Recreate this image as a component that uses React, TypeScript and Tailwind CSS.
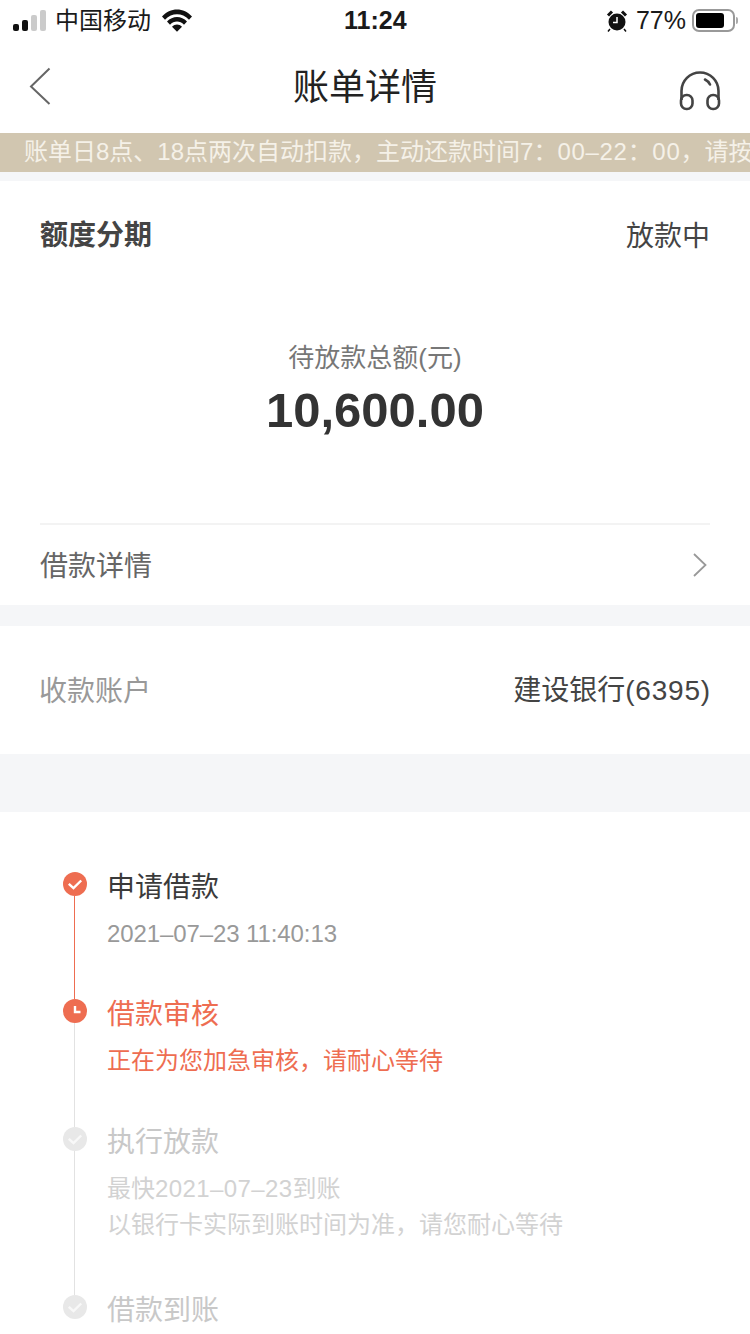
import React from 'react'

const font = { fontFamily: '"Liberation Sans", "Noto Sans CJK SC", sans-serif' }

function StatusBar() {
  return (
    <div className="h-[44px] flex items-center justify-between relative text-[#1a1a1a]">
      <div className="flex items-center pl-[13px]">
        <div className="flex items-end gap-[3px] h-[21px] mt-[-3px]">
          <span className="w-[6px] h-[7px] rounded-[2px] bg-[#111]" />
          <span className="w-[6px] h-[11px] rounded-[2px] bg-[#111]" />
          <span className="w-[6px] h-[16px] rounded-[2px] bg-[#cbcbcb]" />
          <span className="w-[6px] h-[21px] rounded-[2px] bg-[#cbcbcb]" />
        </div>
        <span className="ml-[9px] mt-[-3px] text-[24px] leading-none">中国移动</span>
        <svg className="ml-[11px] mt-[-4px]" width="30" height="23" viewBox="0 0 30 23">
          <path d="M0 7.500C8-2 22-2 30 7.500l-3 3.200C20 3.500 10 3.500 3 10.700z" fill="#111" />
          <path d="M5 12.600C10.500 6.500 19.500 6.500 25 12.600l-3 3.200c-4-4.300-10-4.300-14 0z" fill="#111" />
          <path d="M10 17.800c3-3 7-3 10 0l-5 5z" fill="#111" />
        </svg>
      </div>
      <span className="absolute left-[344px] top-[5px] text-[25px] leading-[30px] font-bold">11:24</span>
      <div className="flex items-center pr-[12px]">
        <svg className="mt-[-3px]" width="22" height="24" viewBox="0 0 22 24">
          <circle cx="11" cy="13" r="8.500" fill="#111" />
          <path d="M2 6.500 6 2.500M20 6.500l-4-4" stroke="#111" strokeWidth="3" />
          <path d="M4 20l-2 2.500M18 20l2 2.500" stroke="#111" strokeWidth="1.500" />
          <path d="M11 8v5.500H7" stroke="#fff" strokeWidth="1.500" fill="none" />
        </svg>
        <span className="ml-[8px] mt-[-3px] text-[25px] leading-none">77%</span>
        <div className="ml-[6px] mt-[-3px] w-[43px] h-[23px] rounded-[7px] border-2 border-[#999] p-[2px]">
          <div className="w-[28px] h-full rounded-[3px] bg-black" />
        </div>
        <span className="ml-[1px] mt-[-3px] w-[2px] h-[7px] rounded-r bg-[#aaa]" />
      </div>
    </div>
  )
}

function NavBar() {
  return (
    <div className="h-[89px] flex items-center justify-between relative">
      <svg className="ml-[29px] mt-[-5px]" width="22" height="38" viewBox="0 0 22 38">
        <path d="M20.500 1.500 2 19.500l18.500 17.500" fill="none" stroke="#666" strokeWidth="2" />
      </svg>
      <h1 className="absolute left-[293px] top-[21px] text-[36px] leading-[46px] font-normal text-[#222]">账单详情</h1>
      <svg className="mr-[29px] mt-[5px]" width="42" height="40" viewBox="0 0 42 40">
        <path d="M2.500 29V20a18.500 18.500 0 0 1 37 0v9" fill="none" stroke="#444" strokeWidth="2.600" />
        <rect x="2" y="24" width="11.500" height="14" rx="5.500" fill="none" stroke="#444" strokeWidth="2.600" />
        <rect x="28.500" y="24" width="11.500" height="14" rx="5.500" fill="none" stroke="#444" strokeWidth="2.600" />
        <path d="M26 8.500a11 11 0 0 1 5 5" fill="none" stroke="#444" strokeWidth="2.600" strokeLinecap="round" />
      </svg>
    </div>
  )
}

type StepProps = {
  title: string
  lines: React.ReactNode[]
  state: 'done' | 'active' | 'todo'
  lineClass?: string
  heightClass: string
}

function Dot({ state }: { state: StepProps['state'] }) {
  if (state === 'active') {
    return (
      <svg width="24" height="24" viewBox="0 0 24 24">
        <circle cx="12" cy="12" r="12" fill="#ee6d51" />
        <path d="M12 7v6h5.500" fill="none" stroke="#fff" strokeWidth="2.400" />
      </svg>
    )
  }
  return (
    <svg width="24" height="24" viewBox="0 0 24 24">
      <circle cx="12" cy="12" r="12" fill={state === 'done' ? '#ee6d51' : '#e8e8e8'} />
      <path d="M5.800 11.800l4.700 4.400 7.700-7.700" fill="none" stroke={state === 'done' ? '#fff' : '#f8f8f8'} strokeWidth="2.400" />
    </svg>
  )
}

function Step({ title, lines, state, lineClass, heightClass }: StepProps) {
  const titleColor = state === 'done' ? 'text-[#3a3a3a]' : state === 'active' ? 'text-[#ee6d51]' : 'text-[#c8c8c8]'
  const subColor = state === 'done' ? 'text-[#999]' : state === 'active' ? 'text-[#ee6d51]' : 'text-[#d2d2d2]'
  return (
    <div className={`flex ${heightClass}`}>
      <div className="w-[24px] flex flex-col">
        <Dot state={state} />
        {lineClass && <div className={`ml-[11px] w-[1px] flex-1 ${lineClass}`} />}
      </div>
      <div className="ml-[20px] mt-[-16px]">
        <div className={`text-[28px] leading-[36px] pt-[14px] box-content ${titleColor}`}>{title}</div>
        <div className="mt-[10px]">
          {lines.map((l, i) => (
            <div key={i} className={`text-[24px] leading-[36px] ${subColor}`}>{l}</div>
          ))}
        </div>
      </div>
    </div>
  )
}

export default function App() {
  return (
    <div className="w-[750px] h-[1334px] overflow-hidden bg-white" style={font}>
      <StatusBar />
      <NavBar />
      <div className="h-[39px] bg-[#d1c6b0] overflow-hidden whitespace-nowrap pl-[24px] text-[24px] leading-[38px] text-[#f5f1e8]">
        账单日8点、18点两次自动扣款，主动还款时间7：<span className="tracking-[0.7px]">00–22：00</span>，请按
      </div>
      <div className="h-[9px] bg-[#f5f6f8]" />

      <section className="h-[424px] px-[40px] flex flex-col">
        <div className="flex justify-between pt-[37px] text-[28px] leading-[36px]">
          <span className="font-bold text-[#444]">额度分期</span>
          <span className="mt-[1px] text-[#444]">放款中</span>
        </div>
        <div className="flex flex-col items-center pt-[85px]">
          <span className="text-[26px] leading-[36px] text-[#777]">待放款总额(元)</span>
          <span className="text-[49px] leading-[60px] mt-[4px] font-bold text-[#333]">10,600.00</span>
        </div>
        <div className="mt-auto border-t-2 border-[#f3f3f3] h-[82px] flex items-center justify-between">
          <span className="mt-[3px] text-[28px] text-[#666]">借款详情</span>
          <svg className="mr-[3px]" width="14" height="24" viewBox="0 0 14 24">
            <path d="M1 1l11.500 11L1 23" fill="none" stroke="#999" strokeWidth="1.800" />
          </svg>
        </div>
      </section>
      <div className="h-[21px] bg-[#f5f6f8]" />

      <section className="h-[128px] pl-[39px] pr-[39px] flex items-center justify-between">
        <span className="mt-[3px] text-[28px] text-[#999]">收款账户</span>
        <span className="mt-[2px] text-[28px] text-[#444]">建设银行<span className="tracking-[0.8px]">(6395)</span></span>
      </section>
      <div className="h-[58px] bg-[#f5f6f8]" />

      <section className="pl-[63px] pt-[60px]">
        <Step state="done" title="申请借款" lines={[<span className="tracking-[-0.1px]">2021–07–23 11:40:13</span>]} lineClass="bg-[#ee6d51]" heightClass="h-[127px]" />
        <Step state="active" title="借款审核" lines={['正在为您加急审核，请耐心等待']} lineClass="bg-[#e2e2e2]" heightClass="h-[128px]" />
        <Step
          state="todo"
          title="执行放款"
          lines={[<>最快<span className="tracking-[0.4px]">2021–07–23</span>到账</>, '以银行卡实际到账时间为准，请您耐心等待']}
          lineClass="bg-[#e2e2e2]"
          heightClass="h-[168px]"
        />
        <Step state="todo" title="借款到账" lines={[]} heightClass="h-[40px]" />
      </section>
    </div>
  )
}
